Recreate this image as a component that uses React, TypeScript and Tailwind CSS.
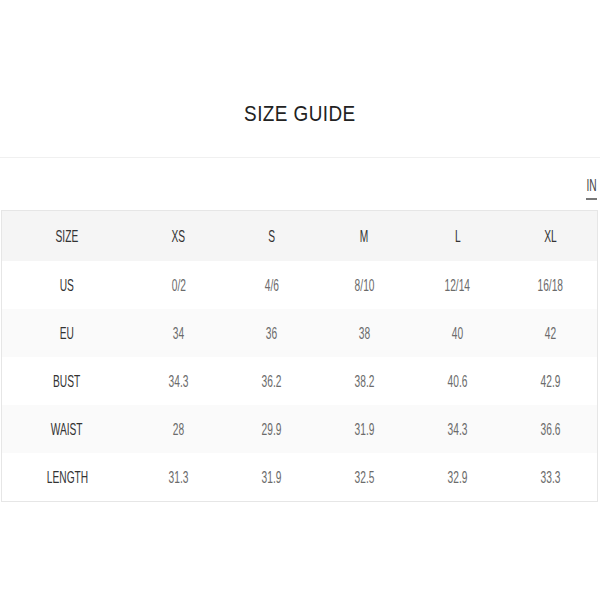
import React from "react";

const cols = ["XS", "S", "M", "L", "XL"];
const rows: { label: string; values: string[] }[] = [
  { label: "US", values: ["0/2", "4/6", "8/10", "12/14", "16/18"] },
  { label: "EU", values: ["34", "36", "38", "40", "42"] },
  { label: "BUST", values: ["34.3", "36.2", "38.2", "40.6", "42.9"] },
  { label: "WAIST", values: ["28", "29.9", "31.9", "34.3", "36.6"] },
  { label: "LENGTH", values: ["31.3", "31.9", "32.5", "32.9", "33.3"] },
];

function Cell({ text, first, dark }: { text: string; first?: boolean; dark?: boolean }) {
  return (
    <div
      className={
        (first ? "w-[130px] " : "w-[93px] ") +
        "flex items-center justify-center shrink-0"
      }
    >
      <span
        className={
          "inline-block scale-x-[0.6] text-[17px] leading-none " +
          (dark ? "text-[#333]" : "text-[#6b6b6b]")
        }
      >
        {text}
      </span>
    </div>
  );
}

export default function App() {
  return (
    <div
      className="w-[600px] h-[600px] bg-white overflow-hidden"
      style={{ fontFamily: '"Liberation Sans", Arial, sans-serif' }}
    >
      <div className="pt-[100px] h-[158px] border-b border-[#f0f0f0] flex justify-center">
        <h1 className="h-[28px] flex items-center">
          <span className="inline-block scale-x-[0.86] text-[22px] leading-none text-[#222] tracking-[0.5px]">
            SIZE GUIDE
          </span>
        </h1>
      </div>
      <div className="h-[52px] flex justify-end items-start pt-[19px] pr-[3px]">
        <div className="w-[11px] flex flex-col items-center">
          <span className="inline-block scale-x-[0.6] text-[17px] leading-none text-[#444]">IN</span>
          <div className="mt-[4px] w-[11px] h-[2px] bg-[#777]" />
        </div>
      </div>
      <div className="ml-[1px] w-[597px] border border-[#e6e6e6]">
        <div className="flex h-[50px] bg-[#f5f5f5]">
          <Cell text="SIZE" first dark />
          {cols.map((c) => (
            <Cell key={c} text={c} dark />
          ))}
        </div>
        {rows.map((r, i) => (
          <div key={r.label} className={"flex h-[48px] " + (i % 2 === 1 ? "bg-[#fafafa]" : "bg-white")}>
            <Cell text={r.label} first dark />
            {r.values.map((v, j) => (
              <Cell key={j} text={v} />
            ))}
          </div>
        ))}
      </div>
    </div>
  );
}
